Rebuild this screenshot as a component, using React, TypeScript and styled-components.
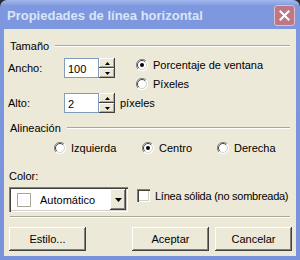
import React from 'react'
import styled, { createGlobalStyle } from 'styled-components'

const Global = createGlobalStyle`
  html, body { margin: 0; padding: 0; background: #2a2a2a; }
  body { font-family: "Liberation Sans", Arial, sans-serif; font-size: 11px; color: #000; }
`

const App = () => {
  return (
    <>
      <Global />
      <Window>
        <TitleBar>
          <Title>Propiedades de línea horizontal</Title>
          <CloseButton>
            <svg width="11" height="11" viewBox="0 0 11 11">
              <path d="M1.5 1.5 L9.5 9.5 M9.5 1.5 L1.5 9.5" stroke="#fff" strokeWidth="2" strokeLinecap="square" />
            </svg>
          </CloseButton>
        </TitleBar>
        <Body>
          <GroupHeader>
            <span>Tamaño</span>
            <Etch />
          </GroupHeader>
          <SizeGrid>
            <FieldLabel row={1}>Ancho:</FieldLabel>
            <SpinField value="100" row={1} />
            <RadioStack>
              <Radio checked label="Porcentaje de ventana" />
              <Radio label="Píxeles" />
            </RadioStack>
            <FieldLabel row={3}>Alto:</FieldLabel>
            <SpinField value="2" row={3} />
            <Unit>píxeles</Unit>
          </SizeGrid>
          <GroupHeader top={8}>
            <span>Alineación</span>
            <Etch />
          </GroupHeader>
          <AlignRow>
            <AlignCell w={88}><Radio label="Izquierda" /></AlignCell>
            <AlignCell w={75}><Radio checked label="Centro" /></AlignCell>
            <AlignCell w={70}><Radio label="Derecha" /></AlignCell>
          </AlignRow>
          <ColorLabel>Color:</ColorLabel>
          <ColorRow>
            <Combo>
              <ComboInner>
                <Swatch />
                <span>Automático</span>
              </ComboInner>
              <DropButton>
                <svg width="7" height="4" viewBox="0 0 7 4"><path d="M0 0 H7 L3.5 4 Z" fill="#000" /></svg>
              </DropButton>
            </Combo>
            <CheckOption>
              <CheckBox />
              <span>Línea sólida (no sombreada)</span>
            </CheckOption>
          </ColorRow>
          <Separator />
          <ButtonRow>
            <PushButton>Estilo...</PushButton>
            <RightButtons>
              <PushButton>Aceptar</PushButton>
              <PushButton>Cancelar</PushButton>
            </RightButtons>
          </ButtonRow>
        </Body>
      </Window>
    </>
  )
}

export default App

const SpinField = ({ value, row }: { value: string; row: number }) => (
  <SpinWrap row={row}>
    <EditBox>{value}</EditBox>
    <SpinButtons>
      <SpinBtn>
        <svg width="5" height="3" viewBox="0 0 5 3"><path d="M2.5 0 L5 3 H0 Z" fill="#000" /></svg>
      </SpinBtn>
      <SpinBtn>
        <svg width="5" height="3" viewBox="0 0 5 3"><path d="M0 0 H5 L2.5 3 Z" fill="#000" /></svg>
      </SpinBtn>
    </SpinButtons>
  </SpinWrap>
)

const Radio = ({ checked, label }: { checked?: boolean; label: string }) => (
  <RadioOption>
    <svg width="12" height="12" viewBox="0 0 12 12">
      <circle cx="6" cy="6" r="5.5" fill="#fff" />
      <path d="M10 2 A5.5 5.5 0 0 0 2 10" stroke="#808080" strokeWidth="1" fill="none" />
      <path d="M9.2 2.8 A4.5 4.5 0 0 0 2.8 9.2" stroke="#404040" strokeWidth="1" fill="none" />
      <path d="M10 2 A5.5 5.5 0 0 1 2 10" stroke="#fff" strokeWidth="1" fill="none" />
      <path d="M9.2 2.8 A4.5 4.5 0 0 1 2.8 9.2" stroke="#d4d0c8" strokeWidth="1" fill="none" />
      {checked && <circle cx="6" cy="6" r="2" fill="#000" />}
    </svg>
    <span>{label}</span>
  </RadioOption>
)

const Window = styled.div`
  width: 300px;
  height: 260px;
  box-sizing: border-box;
  background: linear-gradient(#a3b9ee, #7d98de 6px, #7893dc);
  border-radius: 7px 7px 0 0;
  display: flex;
  flex-direction: column;
  padding: 0 4px 4px 4px;
`
const TitleBar = styled.div`
  height: 29px;
  flex-shrink: 0;
  display: flex;
  align-items: center;
  justify-content: space-between;
  padding: 0 1px 0 3px;
`
const Title = styled.div`
  font-family: "Liberation Sans", Arial, sans-serif;
  font-weight: bold;
  font-size: 13px;
  color: #dbe4f7;
  margin-top: 2px;
`
const CloseButton = styled.div`
  width: 21px;
  height: 21px;
  margin-top: 1px;
  box-sizing: border-box;
  border: 1px solid #d9c0cc;
  border-radius: 3px;
  background: #bf7785;
  display: flex;
  align-items: center;
  justify-content: center;
`
const Body = styled.div`
  flex: 1;
  background: #ece9d8;
  padding: 10px 4px 0 4px;
  display: flex;
  flex-direction: column;
`
const GroupHeader = styled.div<{ top?: number }>`
  display: flex;
  align-items: center;
  gap: 6px;
  margin-top: ${p => p.top || 0}px;
  padding-left: 2px;
  height: 13px;
`
const Etch = styled.div`
  flex: 1;
  height: 0;
  border-top: 1px solid #aca899;
  border-bottom: 1px solid #fff;
  margin: 1px 2px 0 0;
`
const SizeGrid = styled.div`
  display: grid;
  grid-template-columns: 56px 56px auto;
  grid-template-rows: 20px 15px 20px;
  margin-top: 6px;
`
const FieldLabel = styled.div<{ row: number }>`
  grid-row: ${p => p.row};
  grid-column: 1;
  align-self: center;
`
const SpinWrap = styled.div<{ row: number }>`
  grid-row: ${p => p.row};
  grid-column: 2;
  display: flex;
`
const EditBox = styled.div`
  width: 35px;
  height: 20px;
  box-sizing: border-box;
  border: 1px solid #7f9db9;
  background: #fff;
  padding: 4px 0 0 3px;
`
const SpinButtons = styled.div`
  width: 16px;
  display: flex;
  flex-direction: column;
`
const SpinBtn = styled.div`
  height: 10px;
  box-sizing: border-box;
  background: #ece9d8;
  box-shadow: inset -1px -1px #404040, inset 1px 1px #fff, inset -2px -2px #aca899;
  display: flex;
  align-items: center;
  justify-content: center;
`
const RadioStack = styled.div`
  grid-row: 1 / 3;
  grid-column: 3;
  display: flex;
  flex-direction: column;
  gap: 6px;
  margin: 0 0 0 16px;
`
const RadioOption = styled.label`
  display: flex;
  align-items: center;
  gap: 5px;
  height: 13px;
  white-space: nowrap;
`
const Unit = styled.div`
  grid-row: 3;
  grid-column: 3;
  align-self: center;
`
const AlignRow = styled.div`
  display: flex;
  padding-left: 46px;
  margin-top: 7px;
`
const AlignCell = styled.div<{ w: number }>`
  width: ${p => p.w}px;
`
const ColorLabel = styled.div`
  margin-top: 16px;
  padding-left: 1px;
  height: 13px;
`
const ColorRow = styled.div`
  display: flex;
  align-items: flex-start;
  gap: 9px;
  margin-top: 4px;
  padding-left: 1px;
`
const Combo = styled.div`
  width: 119px;
  height: 25px;
  flex-shrink: 0;
  box-sizing: border-box;
  background: #fff;
  box-shadow: inset 1px 1px #808080, inset 2px 2px #404040, inset -1px -1px #fff, inset -2px -2px #d4d0c8;
  padding: 2px;
  display: flex;
`
const ComboInner = styled.div`
  flex: 1;
  display: flex;
  align-items: center;
  padding-left: 6px;
  gap: 9px;
`
const Swatch = styled.div`
  width: 14px;
  height: 14px;
  box-sizing: border-box;
  border: 1px solid #aca899;
  background: #fff;
`
const DropButton = styled.div`
  width: 16px;
  height: 21px;
  box-sizing: border-box;
  background: #ece9d8;
  box-shadow: inset -1px -1px #404040, inset 1px 1px #fff, inset -2px -2px #808080;
  display: flex;
  align-items: center;
  justify-content: center;
`
const CheckOption = styled.label`
  display: flex;
  align-items: center;
  gap: 5px;
  margin-top: 2px;
  white-space: nowrap;
  letter-spacing: -0.25px;
`
const CheckBox = styled.div`
  width: 13px;
  height: 13px;
  box-sizing: border-box;
  background: #fff;
  box-shadow: inset 1px 1px #808080, inset 2px 2px #404040, inset -1px -1px #fff, inset -2px -2px #d4d0c8;
`
const Separator = styled.div`
  height: 0;
  border-top: 1px solid #aca899;
  border-bottom: 1px solid #fff;
  margin: 4px 2px 0 2px;
`
const ButtonRow = styled.div`
  display: flex;
  justify-content: space-between;
  margin-top: 9px;
  padding-left: 1px;
`
const RightButtons = styled.div`
  display: flex;
  gap: 6px;
`
const PushButton = styled.button`
  width: 77px;
  height: 24px;
  font-family: "Liberation Sans", Arial, sans-serif;
  font-size: 11px;
  color: #000;
  background: #ece9d8;
  border: none;
  padding: 0;
  box-shadow: inset -1px -1px #404040, inset 1px 1px #fff, inset -2px -2px #808080;
`
